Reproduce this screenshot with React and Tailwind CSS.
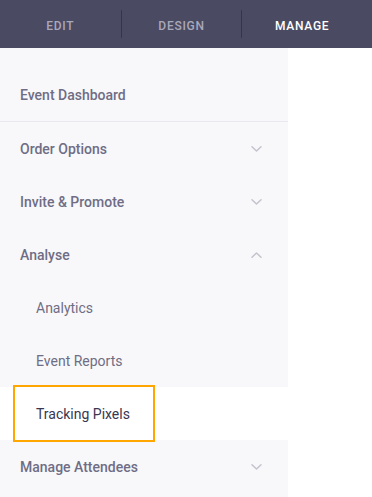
import React from 'react';

const tabs = [
  { label: 'Edit', active: false },
  { label: 'Design', active: false },
  { label: 'Manage', active: true },
];

function Chevron({ up }) {
  return (
    <svg width="11" height="6" viewBox="0 0 11 6" className="text-[#c4c3ce]">
      <polyline
        points={up ? '1,5.2 5.5,1 10,5.2' : '1,0.8 5.5,5 10,0.8'}
        fill="none"
        stroke="currentColor"
        strokeWidth="1.5"
        strokeLinecap="round"
        strokeLinejoin="round"
      />
    </svg>
  );
}

function Section({ label, up }) {
  return (
    <div className="h-[53px] flex items-center justify-between pl-5 pr-[26px] pt-px">
      <span className="text-[14px] font-medium text-[#6f6d85]">{label}</span>
      <Chevron up={up} />
    </div>
  );
}

function SubItem({ label }) {
  return (
    <div className="h-[53px] flex items-center pl-9 pt-px">
      <span className="text-[14px] text-[#6f6d85]">{label}</span>
    </div>
  );
}

export default function App() {
  return (
    <div className="w-[372px] h-[497px] bg-white overflow-hidden" style={{ fontFamily: 'Roboto, "Noto Sans", sans-serif' }}>
      {/* top tab bar */}
      <div className="h-12 bg-[#4b4a63] flex items-center">
        <div className="w-[362px] grid grid-cols-3 items-center">
          {tabs.map((t, i) => (
            <div key={t.label} className={'h-7 flex items-center justify-center pt-[3px] ' + (i > 0 ? 'border-l border-[#36354a]' : '')}>
              <span
                className={
                  'uppercase text-[12px] font-medium tracking-[0.06em] ' +
                  (t.active ? 'text-white' : 'text-[#a9a8ba]')
                }
              >
                {t.label}
              </span>
            </div>
          ))}
        </div>
      </div>

      <div className="flex">
        <div className="w-[288px] bg-[#f8f8fa] pt-[21px] h-[449px]">
          <div className="h-[53px] flex items-center pl-5 pt-px border-b border-[#e9e9ee]">
            <span className="text-[14px] font-medium text-[#6f6d85]">Event Dashboard</span>
          </div>
          <Section label="Order Options" />
          <Section label="Invite & Promote" />
          <Section label="Analyse" up />
          <SubItem label="Analytics" />
          <SubItem label="Event Reports" />
          <div className="h-[53px] bg-white">
            <a className="ml-[15px] w-[138px] h-full flex items-center pl-[21px] pt-px outline-2 outline-[#ffa600] text-[14px] text-[#39364f]">
              Tracking Pixels
            </a>
          </div>
          <Section label="Manage Attendees" />
        </div>
        <div className="flex-1 bg-white" />
      </div>
    </div>
  );
}
